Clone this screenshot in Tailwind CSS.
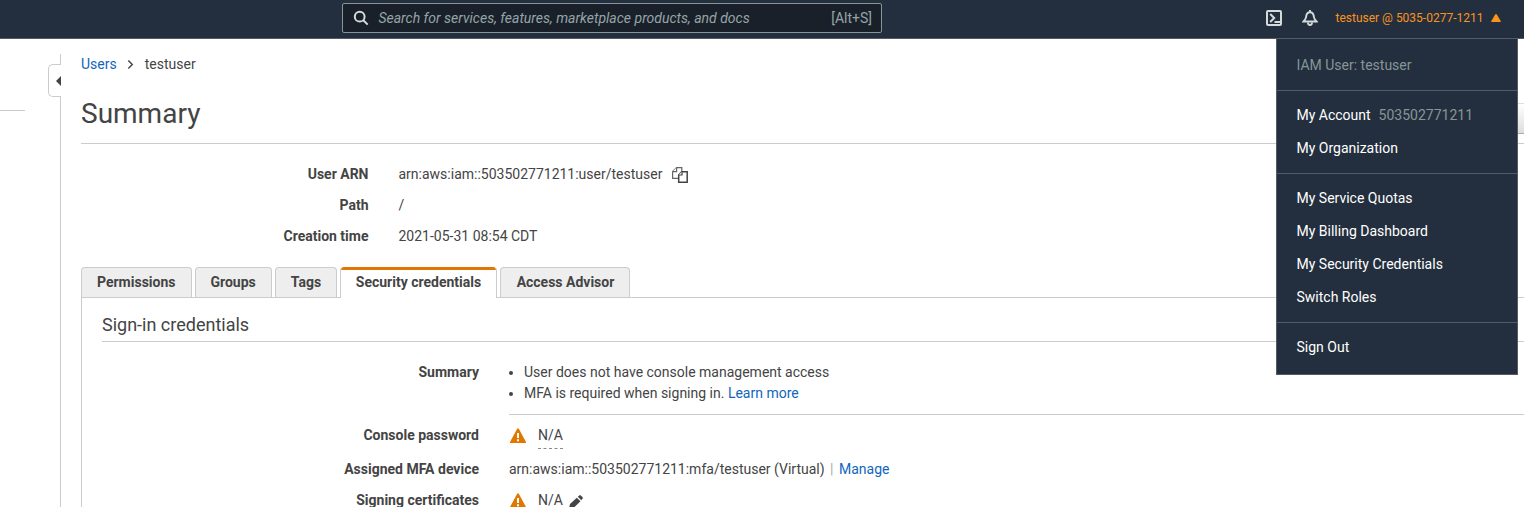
<!DOCTYPE html>
<html lang="en">
<head>
<meta charset="utf-8">
<title>IAM Management Console</title>
<script src="https://cdn.jsdelivr.net/npm/@tailwindcss/browser@4"></script>
</head>
<body class="h-[507px] overflow-hidden bg-white font-['Roboto',sans-serif] text-sm leading-[20px] text-[#444]">
<header class="relative flex h-[39px] border-b border-[#545b64] bg-[#232f3e]">
  <div class="mt-[3px] ml-[342px] flex h-[30px] w-[540px] items-center rounded-xs border border-[#879596] bg-[#1a202a] pr-[9px] pl-[10px] text-[#95a5a6]">
    <svg class="mr-[9.400px] size-4 text-[#d5dbdb]" viewBox="0 0 16 16" fill="none" stroke="currentColor" stroke-width="2"><circle cx="6.7" cy="6.7" r="4.9"/><path d="M10.3 10.3l4.4 4.3"/></svg>
    <span class="italic">Search for services, features, marketplace products, and docs</span>
    <span class="ml-auto">[Alt+S]</span>
  </div>
  <div class="ml-[384px] flex h-[36px] items-center text-[#d5dbdb]">
    <svg class="size-4" viewBox="0 0 16 16" fill="none" stroke="currentColor" stroke-width="2"><rect x="1" y="1" width="14" height="14" rx="1"/><path d="M4.2 4l4 4-4 4M8.5 12H14"/></svg>
    <svg class="ml-5 size-4" viewBox="0 0 16 16" fill="none" stroke="currentColor" stroke-width="1.9"><path d="M8 0v2M1.500 11.500c1.600-1.600 2.400-2.500 2.600-4.500C4.300 3.800 5.500 2.300 8 2.300s3.700 1.500 3.900 4.700c.2 2 1 2.900 2.600 4.500z"/><path d="M6 12.500c0 1.700.7 2.500 2 2.500s2-.8 2-2.500"/></svg>
    <span class="ml-[17.500px] text-[12px] text-[#fa931e]">testuser @ 5035-0277-1211</span>
    <svg class="ml-[7.500px] h-2 w-2.5" viewBox="0 0 10 8" fill="#fa931e"><path d="M4.300.3h1.400L9.700 7v1H.3V7z"/></svg>
  </div>
  <nav class="absolute top-[38px] left-[1276px] z-10 w-[242px] border border-[#545b64] bg-[#232f3e] text-white">
    <div class="flex h-[51px] items-center px-[19.500px] text-[#879596]">IAM User: testuser</div>
    <div class="flex h-[83px] flex-col gap-[13px] border-t border-[#545b64] px-[19.500px] pt-[14px]">
      <div>My Account <span class="ml-[4.500px] text-[#879596]">503502771211</span></div>
      <div>My Organization</div>
    </div>
    <div class="flex h-[149px] flex-col gap-[13px] border-t border-[#545b64] px-[19.500px] pt-[14px]">
      <div>My Service Quotas</div><div>My Billing Dashboard</div><div>My Security Credentials</div><div>Switch Roles</div>
    </div>
    <div class="h-[52px] border-t border-[#545b64] px-[19.500px] pt-[14px]">Sign Out</div>
  </nav>
</header>
<div class="flex h-[468px]">
  <aside class="flex w-[61px] shrink-0 justify-between">
    <div class="mt-[71px] h-px w-[25px] bg-[#ccc]"></div>
    <div class="mt-[15px] flex w-[13px] flex-col items-end">
      <div class="h-[10px] w-px bg-[#ccc]"></div>
      <div class="flex h-[33px] w-[13px] items-center justify-end rounded-l-[5px] border border-r-0 border-[#ccc]">
        <svg class="h-[10px] w-[5px]" viewBox="0 0 5 10" fill="#444"><path d="M0 5l5-5v10z"/></svg>
      </div>
      <div class="w-px grow bg-[#ccc]"></div>
    </div>
  </aside>
  <main class="ml-5 flex min-w-0 grow flex-col">
    <div class="mt-[15px] flex h-5 items-center">
      <a class="text-[#1166bb]">Users</a>
      <svg class="mr-[10.500px] ml-[10.500px] h-[9px] w-[7px]" viewBox="0 0 7 9" fill="none" stroke="#444" stroke-width="1.400"><path d="M1.300.5l4 4-4 4"/></svg>
      <span>testuser</span>
    </div>
    <div class="flex h-[70px] shrink-0 items-start justify-between border-b border-[#ccc] pt-[23px]">
      <h1 class="text-[28px] leading-[34px]">Summary</h1>
      <div class="mt-[6px] h-[31px] w-[90px] border-y border-t-[#ddd] border-b-[#aaa] bg-linear-to-b from-white to-[#ddd]"></div>
    </div>
    <dl class="mt-[20px] grid grid-cols-[287.500px_1fr] gap-x-[30px] gap-y-[11px]">
      <dt class="text-right font-bold">User ARN</dt>
      <dd class="flex items-center">arn:aws:iam::503502771211:user/testuser
        <svg class="mt-[2px] ml-[10px] h-4 w-4" viewBox="0 0 16 16" fill="#fff" stroke="#666" stroke-width="1.200"><path d="M4.600.6h5.200v10.800H.6V4.600z"/><path d="M4.600.6v4h-4"/><path stroke="#444" stroke-width="1.500" d="M9.800 4.700h5.400v10.500H6.700V8z"/><path stroke="#444" d="M10 4.600V8H6.600"/></svg>
      </dd>
      <dt class="text-right font-bold">Path</dt><dd>/</dd>
      <dt class="text-right font-bold">Creation time</dt><dd>2021-05-31 08:54 CDT</dd>
    </dl>
    <div class="mt-[21px] flex gap-[3px] font-bold">
      <div class="h-[30px] w-[111px] rounded-t border border-b-0 border-[#ccc] bg-[#eee] pt-1 pl-[15px]">Permissions</div>
      <div class="h-[30px] w-[77px] rounded-t border border-b-0 border-[#ccc] bg-[#eee] pt-1 pl-[14.500px]">Groups</div>
      <div class="h-[30px] w-[62px] rounded-t border border-b-0 border-[#ccc] bg-[#eee] pt-1 text-center">Tags</div>
      <div class="z-1 -mb-px h-[31px] w-[157px] overflow-hidden rounded-t border-x border-[#ccc] bg-white text-center"><div class="-mx-px mb-[2px] h-[3px] bg-[#e07700]"></div>Security credentials</div>
      <div class="h-[30px] w-[130px] rounded-t border border-b-0 border-[#ccc] bg-[#eee] pt-1 pl-px text-center">Access Advisor</div>
    </div>
    <section class="grow border-t border-l border-[#ccc] pl-5">
      <h2 class="h-[44px] border-b border-[#ccc] pt-[15px] text-[18px] leading-[24px]">Sign-in credentials</h2>
      <dl class="grid grid-cols-[377px_1fr] gap-x-[30px] pt-[20px]">
        <dt class="text-right font-bold leading-[21px]">Summary</dt>
        <dd class="h-[53px] border-b border-[#ccc] leading-[21px]">
          <ul class="ml-[15px] flex flex-col">
            <li class="flex items-center"><i class="mt-px mr-[11px] -ml-[15px] size-1 rounded-full bg-[#444]"></i>User does not have console management access</li>
            <li class="flex items-center"><i class="mt-px mr-[11px] -ml-[15px] size-1 rounded-full bg-[#444]"></i>MFA is required when signing in.&nbsp;<a class="text-[#1166bb]">Learn more</a></li>
          </ul>
        </dd>
        <dt class="mt-[10px] text-right font-bold">Console password</dt>
        <dd class="mt-[10px] flex h-[34px] items-start">
          <svg class="mt-[3px] mr-[12px] ml-px h-[15px] w-4" viewBox="0 0 16 15"><path d="M7.300.4h1.400L16 14v1H0v-1z" fill="#e07700"/><path d="M8 5v5M8 11.200v2" stroke="#fff" stroke-width="2"/></svg>
          <span class="h-[24px] border-b border-dashed border-[#888]">N/A</span>
        </dd>
        <dt class="text-right font-bold">Assigned MFA device</dt>
        <dd class="flex h-[31px]">arn:aws:iam::503502771211:mfa/testuser (Virtual)<span class="mx-[5.500px] text-[#aaa]">|</span><a class="text-[#1166bb]">Manage</a></dd>
        <dt class="text-right font-bold">Signing certificates</dt>
        <dd class="flex items-start">
          <svg class="mt-[3px] mr-[12px] ml-px h-[15px] w-4" viewBox="0 0 16 15"><path d="M7.300.4h1.400L16 14v1H0v-1z" fill="#e07700"/><path d="M8 5v5M8 11.200v2" stroke="#fff" stroke-width="2"/></svg>
          N/A
          <svg class="mt-[5px] ml-[6px] size-[14px]" viewBox="0 0 14 14" fill="#444"><path d="M0 14l1-5L7.800 2.700l3.700 3.600L4.700 12.800zM8.800 1.800L10.300.4q.8-.7 1.500 0l1.800 1.800q.6.700 0 1.400L12.300 5.200z"/></svg>
        </dd>
      </dl>
    </section>
  </main>
</div>
</body>
</html>
